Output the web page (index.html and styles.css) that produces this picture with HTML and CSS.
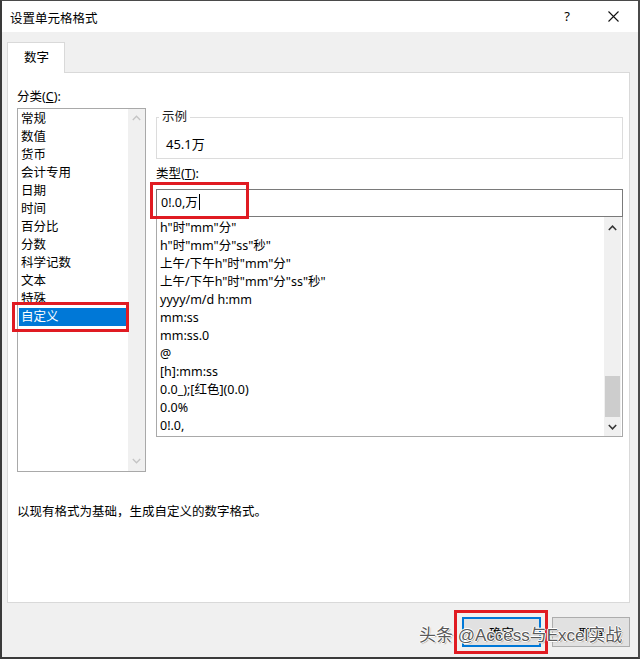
FILE: index.html
```html
<!DOCTYPE html>
<html lang="zh-CN">
<head>
<meta charset="utf-8">
<title>设置单元格格式</title>
<link rel="stylesheet" href="styles.css">
</head>
<body>
<div class="window">
  <div class="titlebar">
    <span class="title">设置单元格格式</span>
    <span class="help">?</span>
    <svg class="close" width="11" height="11" viewBox="0 0 11 11"><path d="M0.5 0.5 L10.5 10.5 M10.5 0.5 L0.5 10.5" stroke="#111" stroke-width="1.1" fill="none"/></svg>
  </div>
  <div class="body">
    <div class="tabs"><div class="tab">数字</div></div>
    <div class="panel">
      <div class="row">
        <div class="leftcol">
          <div class="label">分类(<u>C</u>):</div>
          <div class="listbox">
            <div class="items">
              <div class="item">常规</div>
              <div class="item">数值</div>
              <div class="item">货币</div>
              <div class="item">会计专用</div>
              <div class="item">日期</div>
              <div class="item">时间</div>
              <div class="item">百分比</div>
              <div class="item">分数</div>
              <div class="item">科学记数</div>
              <div class="item">文本</div>
              <div class="item">特殊</div>
              <div class="item selected">自定义</div>
            </div>
            <div class="scrollbar disabled">
              <div class="sbtn up"><svg width="9" height="6" viewBox="0 0 9 6"><path d="M0.8 5 L4.5 1.2 L8.2 5" stroke="#c4c4c4" stroke-width="1.3" fill="none"/></svg></div>
              <div class="strack"></div>
              <div class="sbtn down"><svg width="9" height="6" viewBox="0 0 9 6"><path d="M0.8 1 L4.5 4.8 L8.2 1" stroke="#c4c4c4" stroke-width="1.3" fill="none"/></svg></div>
            </div>
          </div>
        </div>
        <div class="rightcol">
          <fieldset class="sample">
            <legend>示例</legend>
            <div class="sample-value">45.1万</div>
          </fieldset>
          <div class="label type-label">类型(<u>T</u>):</div>
          <div class="inputwrap">
            <div class="input">0!.0,万<span class="caret"></span></div>
          </div>
          <div class="formatlist">
            <div class="items">
              <div class="fitem">h"时"mm"分"</div>
              <div class="fitem">h"时"mm"分"ss"秒"</div>
              <div class="fitem">上午/下午h"时"mm"分"</div>
              <div class="fitem">上午/下午h"时"mm"分"ss"秒"</div>
              <div class="fitem">yyyy/m/d h:mm</div>
              <div class="fitem">mm:ss</div>
              <div class="fitem">mm:ss.0</div>
              <div class="fitem">@</div>
              <div class="fitem">[h]:mm:ss</div>
              <div class="fitem">0.0_);[红色](0.0)</div>
              <div class="fitem">0.0%</div>
              <div class="fitem">0!.0,</div>
            </div>
            <div class="scrollbar active">
              <div class="sbtn up"><svg width="9" height="6" viewBox="0 0 9 6"><path d="M0.8 5 L4.5 1.2 L8.2 5" stroke="#333" stroke-width="1.5" fill="none"/></svg></div>
              <div class="strack"></div>
              <div class="thumb"></div>
              <div class="sbtn down"><svg width="9" height="6" viewBox="0 0 9 6"><path d="M0.8 1 L4.5 4.8 L8.2 1" stroke="#333" stroke-width="1.5" fill="none"/></svg></div>
            </div>
          </div>
        </div>
      </div>
      <div class="desc">以现有格式为基础，生成自定义的数字格式。</div>
    </div>
    <div class="footer">
      <button class="btn ok">确定</button>
      <button class="btn cancel">取消</button>
    </div>
  </div>
  <div class="watermark">头条 @Access与Excel实战</div>
</div>
</body>
</html>
```
FILE: styles.css
```css
html, body {
  margin: 0;
  padding: 0;
  background: #f0f0f0;
}
body {
  font-family: "Noto Sans", "Noto Sans CJK SC", sans-serif;
  font-size: 12.5px;
  color: #000;
}
u { text-decoration: underline; text-underline-offset: 1px; }

.window {
  position: relative;
  width: 640px;
  height: 659px;
  box-sizing: border-box;
  border-top: 1px solid #4a4a4a;
  border-left: 2px solid #3a3a3a;
  border-right: 2px solid #4a4a4a;
  border-bottom: 2px solid #3a3a3a;
  background: #f0f0f0;
  display: flex;
  flex-direction: column;
}

.titlebar {
  height: 31px;
  flex: none;
  background: #ffffff;
  display: flex;
  align-items: center;
  padding-left: 8px;
  padding-right: 19px;
}
.title {
  font-size: 12.5px;
  flex: 1;
  margin-top: 1px;
}
.help {
  font-size: 13px;
  margin-right: 38px;
  margin-top: -2px;
}
.close { display: block; }

.body {
  flex: 1;
  display: flex;
  flex-direction: column;
  padding: 10px 8px 0 5px;
}

.tabs { display: flex; height: 30px; flex: none; }
.tab {
  position: relative;
  z-index: 1;
  width: 58px;
  height: 31px;
  box-sizing: border-box;
  background: #fff;
  border: 1px solid #d9d9d9;
  border-bottom: none;
  padding-left: 16px;
  line-height: 30px;
  font-size: 12.5px;
}

.panel {
  height: 531px;
  box-sizing: border-box;
  background: #fff;
  border: 1px solid #d9d9d9;
  padding: 14px 0 0 9px;
  flex: none;
}

.row { display: flex; align-items: flex-start; gap: 10px; }

.leftcol { width: 129px; }
.label { line-height: 20px; height: 20px; margin-bottom: 1px; padding-left: 0; }

.listbox {
  height: 364px;
  box-sizing: border-box;
  border: 1px solid #a9a9a9;
  display: flex;
  background: #fff;
}
.listbox .items { flex: 1; padding: 1px 1px 0; }
.item {
  height: 18px;
  line-height: 18px;
  padding-left: 2px;
  white-space: nowrap;
}
.item.selected {
  position: relative;
  background: #0078d7;
  color: #fff;
}
.item.selected::after {
  content: "";
  position: absolute;
  left: -7px;
  top: -6px;
  right: -2px;
  bottom: -6px;
  border: 3px solid #e01b22;
}

.scrollbar {
  width: 17px;
  background: #f0f0f0;
  display: flex;
  flex-direction: column;
  align-items: center;
}
.sbtn {
  display: flex;
  align-items: center;
  justify-content: center;
  width: 17px;
}
.listbox .scrollbar .up { height: 18px; }
.listbox .scrollbar .down { height: 20px; }
.strack { flex: 1; }

.rightcol { width: 467px; padding-top: 22px; }

.sample {
  margin: 0;
  padding: 0 0 4px 9px;
  border: 1px solid #dcdcdc;
  min-inline-size: 0;
}
.sample legend {
  margin-left: -7px;
  padding: 0 3px;
  line-height: 16px;
  font-size: 12.5px;
  color: #222;
}
.sample-value {
  margin-top: 9px;
  line-height: 20px;
  font-size: 13px;
}

.type-label { margin-top: 6px; line-height: 18px; height: 18px; margin-bottom: 6px; }

.inputwrap { position: relative; }
.inputwrap::after {
  content: "";
  position: absolute;
  left: -6px;
  top: -7px;
  width: 99px;
  height: 37px;
  box-sizing: border-box;
  border: 3px solid #e01b22;
}
.input {
  height: 28px;
  box-sizing: border-box;
  border: 1px solid #7a7a7a;
  line-height: 26px;
  padding-left: 4px;
  background: #fff;
  font-size: 12.5px;
}
.caret {
  display: inline-block;
  width: 0;
  height: 16px;
  border-left: 1px solid #000;
  vertical-align: -3px;
  margin-left: 1px;
}

.formatlist {
  height: 220px;
  box-sizing: border-box;
  border: 1px solid #a9a9a9;
  border-top: none;
  display: flex;
  padding-right: 1px;
  background: #fff;
}
.formatlist .items { flex: 1; padding: 2px 0 0 3px; }
.fitem {
  height: 18px;
  line-height: 18px;
  white-space: nowrap;
}
.formatlist .scrollbar .up { height: 21px; }
.formatlist .scrollbar .down { height: 19px; }
.thumb {
  width: 15px;
  height: 41px;
  background: #cdcdcd;
}

.desc {
  margin-top: 31px;
  line-height: 18px;
}

.footer {
  flex: 1;
  display: flex;
  justify-content: flex-end;
  align-items: flex-start;
  padding-top: 14px;
  gap: 11px;
}
.btn {
  width: 78px;
  height: 30px;
  box-sizing: border-box;
  font-family: "Noto Sans", "Noto Sans CJK SC", sans-serif;
  font-size: 12.5px;
  background: #e1e1e1;
  border: 1px solid #adadad;
  color: #000;
  padding: 0;
}
.btn.ok {
  position: relative;
  width: 79px;
  border: 2px solid #0078d7;
}
.btn.ok::after {
  content: "";
  position: absolute;
  left: -10px;
  top: -9px;
  width: 94px;
  height: 44px;
  box-sizing: border-box;
  border: 3px solid #e01b22;
}

.watermark {
  position: absolute;
  left: 417px;
  top: 623px;
  font-size: 17px;
  line-height: 24px;
  color: #5a5a5a;
  font-family: "Liberation Sans", "Noto Sans CJK SC", sans-serif;
  text-shadow: 1px 0 0 #fff, -1px 0 0 #fff, 0 1px 0 #fff, 0 -1px 0 #fff, 1px 1px 1px #888;
  white-space: nowrap;
}
```
